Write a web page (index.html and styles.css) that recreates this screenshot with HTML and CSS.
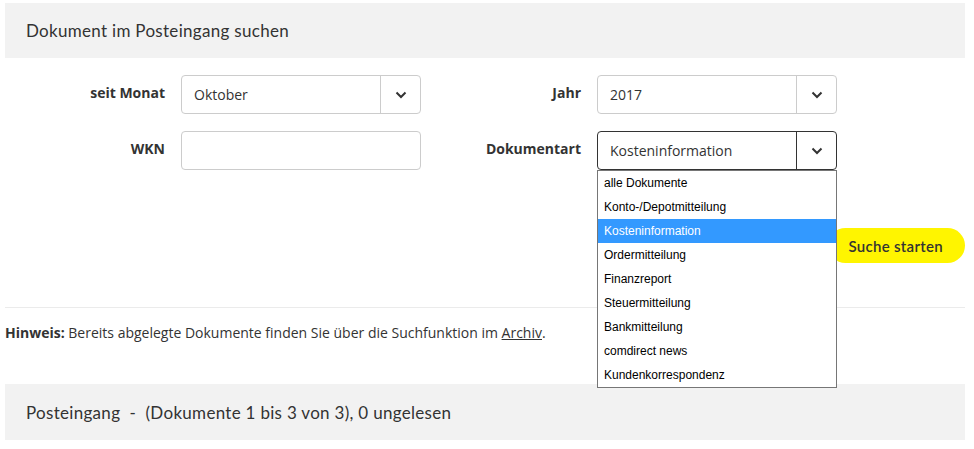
FILE: index.html
```html
<!DOCTYPE html>
<html lang="de">
<head>
<meta charset="UTF-8">
<meta name="viewport" content="width=device-width, initial-scale=1.0">
<title>Posteingang</title>
<link rel="stylesheet" href="styles.css">
</head>
<body>

<div class="wrap">
    <div class="panel-head">Dokument im Posteingang suchen</div>

    <form class="search-form">
        <div class="field">
            <label for="monat">seit Monat</label>
            <div class="select">
                <span class="select-value">Oktober</span>
                <span class="select-arrow">
                    <svg width="12" height="8" viewBox="0 0 12 8"><path d="M1.5 1.5 L6 6 L10.5 1.5" fill="none" stroke="#333" stroke-width="2"/></svg>
                </span>
            </div>
        </div>
        <div class="field">
            <label for="jahr">Jahr</label>
            <div class="select">
                <span class="select-value">2017</span>
                <span class="select-arrow">
                    <svg width="12" height="8" viewBox="0 0 12 8"><path d="M1.5 1.5 L6 6 L10.5 1.5" fill="none" stroke="#333" stroke-width="2"/></svg>
                </span>
            </div>
        </div>
        <div class="field">
            <label for="wkn">WKN</label>
            <input type="text" id="wkn" class="text-input">
        </div>
        <div class="field">
            <label for="art">Dokumentart</label>
            <div class="select open">
                <span class="select-value">Kosteninformation</span>
                <span class="select-arrow">
                    <svg width="12" height="8" viewBox="0 0 12 8"><path d="M1.5 1.5 L6 6 L10.5 1.5" fill="none" stroke="#333" stroke-width="2"/></svg>
                </span>
                <ul class="options">
                    <li>alle Dokumente</li>
                    <li>Konto-/Depotmitteilung</li>
                    <li class="active">Kosteninformation</li>
                    <li>Ordermitteilung</li>
                    <li>Finanzreport</li>
                    <li>Steuermitteilung</li>
                    <li>Bankmitteilung</li>
                    <li>comdirect news</li>
                    <li>Kundenkorrespondenz</li>
                </ul>
            </div>
        </div>
    </form>

    <div class="actions">
        <button type="button" class="btn-search">Suche starten</button>
    </div>

    <p class="note"><b>Hinweis:</b> Bereits abgelegte Dokumente finden Sie über die Suchfunktion im <a href="#">Archiv</a>.</p>

    <div class="panel-foot">Posteingang&nbsp; - &nbsp;(Dokumente 1 bis 3 von 3), 0 ungelesen</div>
</div>

</body>
</html>
```

FILE: styles.css
```css
body {
    margin: 0;
    font-family: "Open Sans", Arial, sans-serif;
    color: #333;
    background-color: #fff;
}
.wrap {
    width: 960px;
    margin: 3px 0 0 5px;
}
.panel-head,
.panel-foot {
    display: flex;
    align-items: center;
    padding-left: 21px;
    background-color: #f2f2f2;
    font-family: Lato, "Open Sans", sans-serif;
    font-size: 17px;
    letter-spacing: 0.3px;
    color: #333;
}
.panel-head {
    height: 55px;
}
.panel-foot {
    height: 56px;
    margin-top: 41px;
}
.search-form {
    display: grid;
    grid-template-columns: 416px 416px;
    row-gap: 17px;
    padding-top: 17px;
}
.field {
    display: grid;
    grid-template-columns: 160px 240px;
    column-gap: 16px;
}
.field label {
    text-align: right;
    font-weight: bold;
    font-size: 14px;
    line-height: 20px;
    padding-top: 8px;
}
.select,
.text-input {
    position: relative;
    height: 39px;
    box-sizing: border-box;
    border: 1px solid #ccc;
    border-radius: 4px;
    background-color: #fff;
}
.select {
    display: flex;
    align-items: center;
}
.select-value {
    flex: 1;
    padding-left: 12px;
    font-size: 14px;
}
.select-arrow {
    display: flex;
    align-items: center;
    justify-content: center;
    width: 39px;
    height: 100%;
    border-left: 1px solid #ccc;
}
.select.open {
    border-color: #333;
}
.select.open .select-arrow {
    border-left-color: #333;
}
.options {
    position: absolute;
    top: calc(100% + 1px);
    left: -1px;
    width: 240px;
    box-sizing: border-box;
    margin: 0;
    padding: 0;
    list-style: none;
    border: 1px solid #767676;
    background-color: #fff;
    font-family: "Liberation Sans", Arial, sans-serif;
    font-size: 12px;
    color: #000;
    z-index: 2;
}
.options li {
    height: 24px;
    line-height: 25px;
    padding-left: 6px;
}
.options li.active {
    background-color: #3399ff;
    color: #fff;
}
.actions {
    display: flex;
    justify-content: flex-end;
    padding: 58px 0 44px;
    border-bottom: 1px solid #ebebeb;
}
.btn-search {
    height: 35px;
    padding: 0 22px 0 20px;
    border: none;
    border-radius: 18px;
    background-color: #fff500;
    font-family: Lato, "Open Sans", sans-serif;
    font-size: 15px;
    font-weight: 600;
    letter-spacing: 0.3px;
    color: #333;
    cursor: pointer;
}
.note {
    margin: 15px 0 0;
    font-size: 14px;
    line-height: 20px;
}
.note a {
    color: #333;
}
```
